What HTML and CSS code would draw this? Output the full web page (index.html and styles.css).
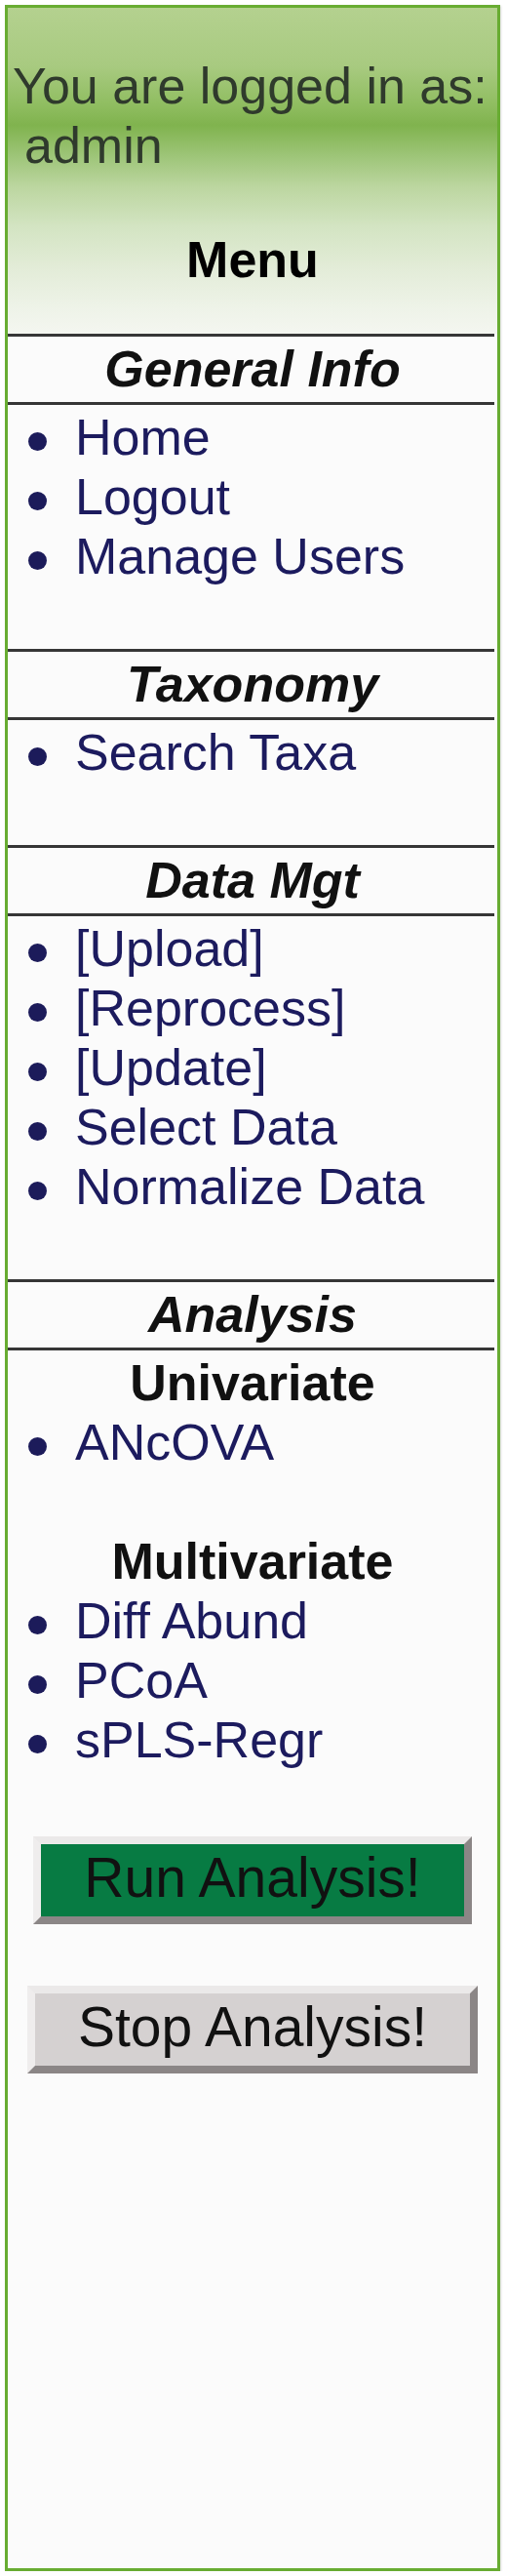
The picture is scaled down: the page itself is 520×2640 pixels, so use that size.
FILE: index.html
```html
<!DOCTYPE html>
<html lang="en">
<head>
<meta charset="utf-8">
<title>Menu</title>
<link rel="stylesheet" href="styles.css">
</head>
<body>
<div class="sidebar">
  <div class="header">
    <div class="login">You are logged in as:</div>
    <div class="login user">admin</div>
    <div class="menu-title">Menu</div>
  </div>

  <div class="rule"></div>
  <div class="section-title">General Info</div>
  <div class="rule"></div>
  <ul class="links">
    <li><a href="#">Home</a></li>
    <li><a href="#">Logout</a></li>
    <li><a href="#">Manage Users</a></li>
  </ul>

  <div class="rule"></div>
  <div class="section-title">Taxonomy</div>
  <div class="rule"></div>
  <ul class="links">
    <li><a href="#">Search Taxa</a></li>
  </ul>

  <div class="rule"></div>
  <div class="section-title">Data Mgt</div>
  <div class="rule"></div>
  <ul class="links">
    <li><a href="#">[Upload]</a></li>
    <li><a href="#">[Reprocess]</a></li>
    <li><a href="#">[Update]</a></li>
    <li><a href="#">Select Data</a></li>
    <li><a href="#">Normalize Data</a></li>
  </ul>

  <div class="rule"></div>
  <div class="section-title">Analysis</div>
  <div class="rule"></div>
  <div class="analysis">
    <div class="subhead">Univariate</div>
    <ul class="links tight">
      <li><a href="#">ANcOVA</a></li>
    </ul>
    <div class="subhead spaced">Multivariate</div>
    <ul class="links tight">
      <li><a href="#">Diff Abund</a></li>
      <li><a href="#">PCoA</a></li>
      <li><a href="#">sPLS-Regr</a></li>
    </ul>
    <div class="actions">
      <button class="btn btn-run" type="button">Run Analysis!</button>
      <button class="btn btn-stop" type="button">Stop Analysis!</button>
    </div>
  </div>
</div>
</body>
</html>
```
FILE: styles.css
```css
html, body {
  margin: 0;
  padding: 0;
  background: #ffffff;
}

body {
  font-family: "Liberation Sans", Arial, sans-serif;
  font-size: 52px;
  line-height: 61px;
  color: #111111;
}

.sidebar {
  box-sizing: border-box;
  width: 508px;
  height: 2630px;
  margin: 5px 0 0 5px;
  border: 3px solid #68ac32;
  background: #fbfbfb;
  box-shadow: 1px 1px 2px rgba(0, 0, 0, 0.15);
  overflow: hidden;
}

.header {
  padding: 50px 0 45px 0;
  background: linear-gradient(to bottom,
    #b4d18f 0%,
    #a8ca80 18%,
    #8fbd60 30%,
    #80b34e 36%,
    #9cc476 45%,
    #bcd6a0 55%,
    #d3e4c2 67%,
    #e3ecd8 80%,
    #eef3e8 92%,
    #f4f6f0 100%);
}

.login {
  padding-left: 5px;
  color: #2f3a2c;
  white-space: nowrap;
}

.login.user {
  padding-left: 17px;
}

.menu-title {
  margin-top: 56px;
  text-align: center;
  font-weight: bold;
  color: #000000;
}

.rule {
  height: 3px;
  margin-right: 3px;
  background: #363636;
}

.section-title {
  padding: 3px 0;
  text-align: center;
  font-weight: bold;
  font-style: italic;
  color: #111111;
}

.links {
  list-style: none;
  margin: 0;
  padding: 3px 0 64px 69px;
}

.links.tight {
  padding-top: 0;
  padding-bottom: 0;
}

.links li::before {
  content: "";
  display: inline-block;
  width: 19px;
  height: 19px;
  border-radius: 50%;
  background: #1c1b5a;
  margin-left: -48px;
  margin-right: 29px;
  vertical-align: 4px;
}

.links a {
  color: #1c1b5e;
  text-decoration: none;
}

.analysis {
  padding-top: 3px;
}

.subhead {
  text-align: center;
  font-weight: bold;
  color: #111111;
}

.subhead.spaced {
  margin-top: 61px;
}

.actions {
  display: flex;
  flex-direction: column;
  align-items: center;
  gap: 63px;
  margin-top: 68px;
}

.btn {
  box-sizing: border-box;
  height: 90px;
  margin: 0;
  padding: 0 44px 6px 44px;
  font-family: "Liberation Sans", Arial, sans-serif;
  font-size: 57px;
  line-height: 68px;
  color: #111111;
  border-width: 8px;
  border-style: solid;
  border-color: #ebe9e9 #8b8686 #8b8686 #efeded;
  border-radius: 0;
  cursor: pointer;
}

.btn-run {
  background: #077b43;
}

.btn-stop {
  background: #d5d1d1;
}
```
